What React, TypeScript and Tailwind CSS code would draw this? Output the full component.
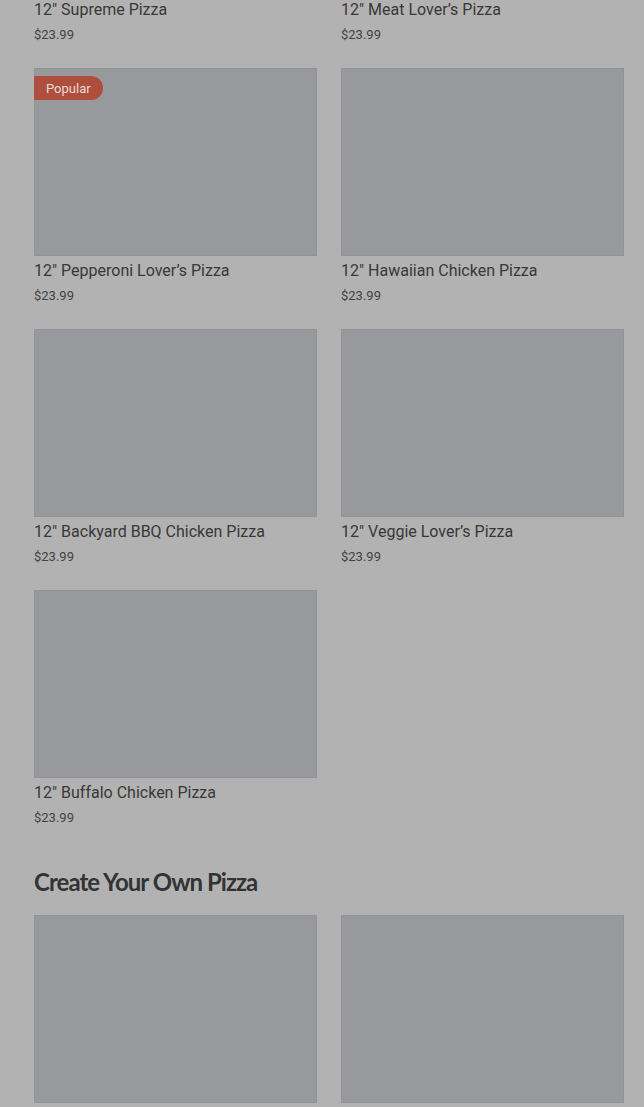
import React from "react";

type Item = { name: string; popular?: boolean };

const rows: Item[][] = [
  [{ name: '12" Supreme Pizza' }, { name: "12\" Meat Lover’s Pizza" }],
  [{ name: "12\" Pepperoni Lover’s Pizza", popular: true }, { name: '12" Hawaiian Chicken Pizza' }],
  [{ name: '12" Backyard BBQ Chicken Pizza' }, { name: "12\" Veggie Lover’s Pizza" }],
  [{ name: '12" Buffalo Chicken Pizza' }],
];

function Card({ item }: { item: Item }) {
  return (
    <div className="flex flex-col">
      <div className="relative h-[188px] bg-[#97999d] border border-[#919397]">
        {item.popular && (
          <span className="absolute left-[-1px] top-[7px] h-[24px] px-[12px] flex items-center rounded-r-full bg-[#ad4f3c] text-[#eadbd6] text-[13px] leading-none">
            Popular
          </span>
        )}
      </div>
      <div className="mt-[4px] text-[16px] leading-[22px] text-[#383838]">{item.name}</div>
      <div className="mt-[2px] text-[13px] leading-[24px] text-[#424242]">$23.99</div>
    </div>
  );
}

export default function App() {
  return (
    <div
      className="w-[644px] h-[1107px] overflow-hidden bg-[#b2b2b2] pl-[34px] pr-[20px]"
      style={{ fontFamily: "Roboto, 'Liberation Sans', sans-serif" }}
    >
      <div className="-mt-[193px] grid grid-cols-2 gap-x-[24px] gap-y-[21px]">
        {rows.flat().map((it, i) => (
          <Card key={i} item={it} />
        ))}
      </div>
      <h2
        className="mt-[36px] text-[24px] leading-[32px] font-bold tracking-[-0.04em] text-[#333333]"
        style={{ fontFamily: "Lato, 'Liberation Sans', sans-serif" }}
      >
        Create Your Own Pizza
      </h2>
      <div className="mt-[17px] grid grid-cols-2 gap-x-[24px]">
        <div className="h-[188px] bg-[#97999d] border border-[#919397]" />
        <div className="h-[188px] bg-[#97999d] border border-[#919397]" />
      </div>
    </div>
  );
}
